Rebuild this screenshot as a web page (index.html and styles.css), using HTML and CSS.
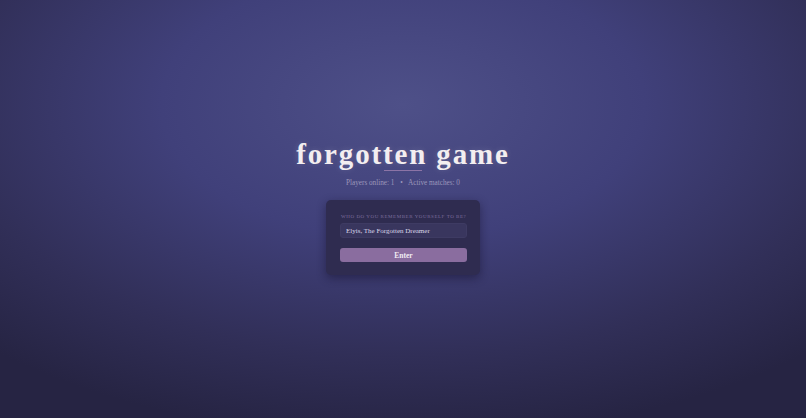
FILE: index.html
```html
<!DOCTYPE html>
<html lang="en">
<head>
<meta charset="utf-8">
<title>forgotten game</title>
<link rel="stylesheet" href="styles.css">
</head>
<body>
<main class="screen">
  <div class="hero">
    <h1 class="title">forgotten game</h1>
    <div class="rule"></div>
    <p class="stats">Players online: 1 <span class="dot">•</span> Active matches: 0</p>
    <form class="card" onsubmit="return false">
      <label class="label" for="name">WHO DO YOU REMEMBER YOURSELF TO BE?</label>
      <input id="name" class="field" type="text" value="Elyis, The Forgotten Dreamer">
      <button class="btn" type="submit">Enter</button>
    </form>
  </div>
</main>
</body>
</html>
```
FILE: styles.css
```css
* { box-sizing: border-box; }
html, body { margin: 0; height: 100%; }
body {
  font-family: "Liberation Serif", serif;
  background: #2a2848;
  overflow: hidden;
}
.screen {
  width: 100%;
  height: 100%;
  background:
    radial-gradient(ellipse 75% 80% at 50% 25%, #4e5088 0%, #40407a 40%, #312f58 75%, #262443 100%);
  display: flex;
  justify-content: center;
  padding-top: 138px;
}
.hero {
  display: flex;
  flex-direction: column;
  align-items: center;
}
.title {
  margin: 0;
  font-family: "Liberation Serif", serif;
  font-weight: bold;
  font-size: 29px;
  line-height: 32px;
  letter-spacing: 1.85px;
  color: #f3eef0;
  text-shadow: 0 0 6px rgba(255,255,255,0.15);
}
.rule {
  width: 38px;
  height: 1px;
  margin-top: 0;
  background: #8c74a6;
}
.stats {
  margin: 7px 0 0;
  font-family: "Liberation Serif", serif;
  font-size: 7.2px;
  line-height: 10px;
  color: #9c97bb;
}
.dot { margin: 0 4px; }
.card {
  margin-top: 12px;
  width: 154px;
  padding: 13px 13px 13px 14px;
  background: #2f2c50;
  border-radius: 5px;
  box-shadow: 0 3px 10px rgba(15, 12, 35, 0.45);
  display: flex;
  flex-direction: column;
}
.label {
  font-family: "Liberation Serif", serif;
  font-size: 5px;
  letter-spacing: 0.55px;
  white-space: nowrap;
  color: #7d6e9e;
  line-height: 7px;
  padding-left: 1px;
}
.field {
  margin-top: 3px;
  height: 15px;
  width: 100%;
  border: 1px solid #3e3b63;
  border-radius: 3px;
  background: #39365e;
  color: #dcd8ea;
  font-family: "Liberation Serif", serif;
  font-size: 7px;
  padding: 0 5px;
  outline: none;
}
.btn {
  margin-top: 10px;
  height: 14px;
  width: 100%;
  border: none;
  border-radius: 3px;
  background: #8a6d9f;
  color: #f1ecf3;
  font-family: "Liberation Serif", serif;
  font-weight: bold;
  font-size: 7.5px;
  padding: 0;
}
```
